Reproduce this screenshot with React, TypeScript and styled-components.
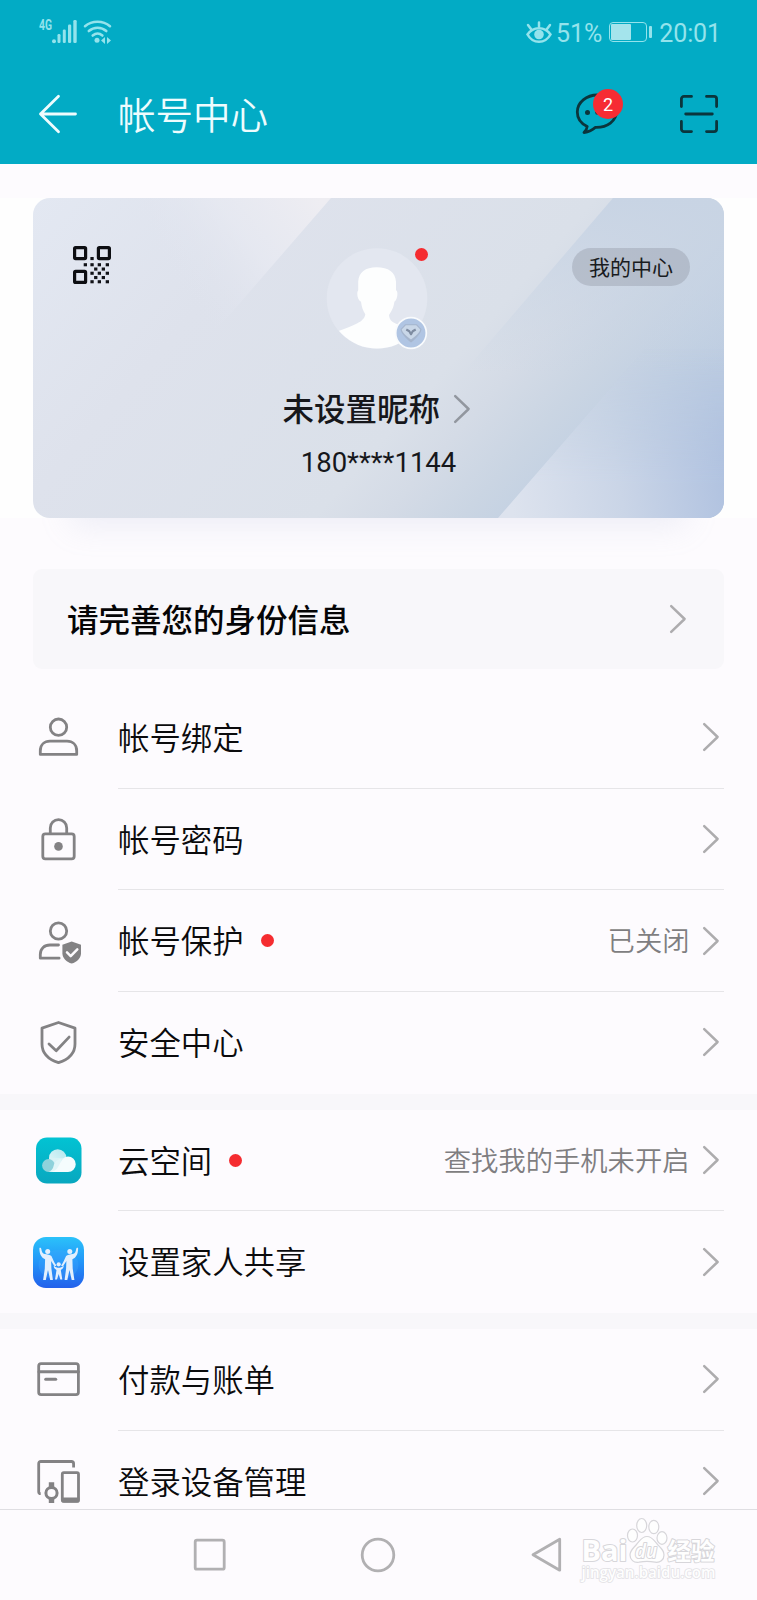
import React from 'react';
import styled, { createGlobalStyle } from 'styled-components';

const GlobalStyle = createGlobalStyle`
  * { box-sizing: border-box; }
  html, body { margin: 0; padding: 0; }
  body {
    width: 757px;
    height: 1600px;
    overflow: hidden;
    background: #fdfbfe;
    font-family: Roboto, "Noto Sans CJK SC", sans-serif;
    color: #0b0b0d;
  }
  svg { display: block; overflow: visible; flex: none; }
`;

const Screen = styled.div`
  width: 757px;
  height: 1600px;
  display: flex;
  flex-direction: column;
  overflow: hidden;
  background: #fdfbfe;
`;

const Header = styled.header`
  height: 164px;
  flex: none;
  background: #02abc5;
  display: flex;
  flex-direction: column;
`;

const StatusBar = styled.div`
  height: 64px;
  display: flex;
  align-items: center;
  justify-content: space-between;
  padding: 0 36px 0 39px;
  color: #94e3ec;
`;

const StatusGroup = styled.div`
  display: flex;
  align-items: center;
`;

const StatusText = styled.span<{ $gap: number }>`
  font-size: 25px;
  line-height: 30px;
  margin-left: ${(p) => p.$gap}px;
  padding-top: 3px;
  letter-spacing: -0.1px;
`;

const Battery = styled.div`
  width: 38px;
  height: 20px;
  margin-left: 7px;
  border: 1.5px solid #94e3ec;
  border-radius: 4px;
  padding: 1px;
`;

const BatteryFill = styled.div`
  width: 20px;
  height: 100%;
  background: #a4e4ec;
  border-radius: 1px;
`;

const BatteryTip = styled.div`
  width: 3px;
  height: 12px;
  margin-left: 2px;
  border-radius: 1px;
  background: #94e3ec;
`;

const TitleBar = styled.div`
  height: 100px;
  display: flex;
  align-items: center;
  padding: 0 39px;
`;

const Title = styled.h1`
  margin: 0 auto 0 41px;
  font-size: 37.5px;
  line-height: 50px;
  font-weight: 350;
  color: #eefcfe;
  padding-top: 4px;
`;

const ChatButton = styled.div`
  position: relative;
  width: 42px;
  height: 40px;
  margin-right: 62px;
`;

const CountBadge = styled.span`
  position: absolute;
  left: 17px;
  top: -5.5px;
  width: 30px;
  height: 30px;
  border-radius: 50%;
  background: #f62c33;
  color: #fff;
  font-size: 18px;
  line-height: 31px;
  text-align: center;
`;

const CardBand = styled.section`
  flex: none;
  margin-top: 34px;
  height: 320px;
  padding: 0 33px;
  background: #fefefe;
`;

const ProfileCard = styled.div`
  position: relative;
  height: 320px;
  border-radius: 17px;
  box-shadow: 0 46px 30px -38px rgba(165, 178, 210, 0.18);
`;

const CardArt = styled.svg`
  position: absolute;
  inset: 0;
  border-radius: 17px;
  overflow: hidden;
`;

const CardContent = styled.div`
  position: relative;
  height: 100%;
  display: flex;
  flex-direction: column;
`;

const CardTop = styled.div`
  display: grid;
  grid-template-columns: 1fr 102px 1fr;
  height: 153px;
  padding: 48px 34px 0 40px;
  align-items: start;
`;

const AvatarBox = styled.div`
  position: relative;
  width: 102px;
  height: 102px;
  margin-left: -3.5px;
  margin-top: 2px;
`;

const Dot = styled.i`
  width: 13px;
  height: 13px;
  border-radius: 50%;
  background: #f52c30;
  flex: none;
`;

const AvatarDot = styled(Dot)`
  position: absolute;
  left: 88px;
  top: 0;
`;

const MemberBadge = styled.svg`
  position: absolute;
  left: 68px;
  top: 68.5px;
`;

const CenterPill = styled.span`
  justify-self: end;
  margin-top: 2px;
  height: 38px;
  width: 118px;
  border-radius: 19px;
  background: rgba(140, 146, 160, 0.37);
  font-size: 21px;
  line-height: 40px;
  text-align: center;
  color: #191b20;
`;

const NameRow = styled.div`
  display: flex;
  align-items: center;
  justify-content: center;
  gap: 14px;
  height: 44px;
  margin-top: 36px;
  padding-right: 4.5px;
`;

const Nickname = styled.span`
  font-size: 31.5px;
  line-height: 44px;
  font-weight: 500;
  color: #16171b;
  padding-top: 4px;
`;

const Phone = styled.div`
  text-align: center;
  margin-top: 14px;
  font-size: 27.5px;
  line-height: 36px;
  color: #16171b;
`;

const Notice = styled.section`
  flex: none;
  margin: 51px 33px 18px;
  height: 100px;
  padding: 0 38.5px 0 34px;
  border-radius: 9px;
  background: #f8f7fa;
  display: flex;
  align-items: center;
  justify-content: space-between;
`;

const NoticeText = styled.span`
  font-size: 31.5px;
  line-height: 46px;
  font-weight: 500;
  color: #050506;
  padding-top: 6px;
`;

const Group = styled.section<{ $clip?: boolean }>`
  flex: ${(p) => (p.$clip ? '1 1 0' : 'none')};
  overflow: hidden;
  border-bottom: ${(p) => (p.$clip ? '0' : '16px solid #f8f7fa')};
`;

const Row = styled.div`
  height: 101.7px;
  display: flex;
  align-items: center;
  padding-left: 32px;
`;

const RowBody = styled.div<{ $last?: boolean }>`
  flex: 1;
  height: 100%;
  margin: 0 33px 0 32.5px;
  padding-right: 5px;
  display: flex;
  align-items: center;
  border-bottom: 1px solid ${(p) => (p.$last ? 'transparent' : '#e6e5e8')};
`;

const RowLabel = styled.span`
  font-size: 31.4px;
  line-height: 46px;
  font-weight: 350;
  margin-left: 0.5px;
  margin-right: 17px;
  padding-top: 5px;
`;

const RowValue = styled.span`
  margin-left: auto;
  margin-right: 13.5px;
  font-size: 27.3px;
  line-height: 40px;
  font-weight: 350;
  color: #7f7e81;
  padding-top: 3.5px;
`;

const ChevronSlot = styled.span<{ $push: boolean }>`
  margin-left: ${(p) => (p.$push ? 'auto' : '0')};
`;

const NavBar = styled.nav`
  position: relative;
  flex: none;
  height: 91px;
  border-top: 1.5px solid #dfdee2;
  background: #fdfbfe;
  display: flex;
  justify-content: center;
  align-items: center;
  gap: 134.5px;
  padding-right: 1px;
`;

const Watermark = styled.div`
  position: absolute;
  left: 580px;
  top: -3.5px;
  width: 138px;
  height: 78px;
`;

const Chevron = ({ color = '#adacae' }: { color?: string }) => (
  <svg width="16" height="28" viewBox="0 0 16 28" fill="none" stroke={color} strokeWidth="2.5" strokeLinecap="round" strokeLinejoin="round">
    <path d="M1.2 1.2 14.6 14 1.2 26.8" />
  </svg>
);

const LineIcon = ({ children }: { children: React.ReactNode }) => (
  <svg width="53" height="53" viewBox="0 0 53 53" fill="none" stroke="#838284" strokeWidth="2.8" strokeLinecap="round" strokeLinejoin="round">
    {children}
  </svg>
);

const PersonIcon = () => (
  <LineIcon>
    <circle cx="26.5" cy="16.2" r="8.2" />
    <path d="M8.3 43.4V39.9C8.3 33.7 12.5 30.2 18 30.2h17c5.5 0 9.7 3.500 9.700 9.700V43.4Z" />
  </LineIcon>
);

const LockIcon = () => (
  <LineIcon>
    <rect x="10.8" y="20.9" width="31.4" height="25" rx="2.6" />
    <path d="M18.3 20.6V14.9a8.2 8.2 0 0 1 16.4 0V20.6" />
    <circle cx="26.5" cy="33.4" r="4.3" fill="#838284" stroke="none" />
  </LineIcon>
);

const GuardIcon = () => (
  <LineIcon>
    <circle cx="26.5" cy="16" r="8.2" />
    <path d="M26.5 30H18c-5.5 0-9.7 3.5-9.7 9.5v3.7h18.8" />
    <path d="M39.7 26.4 49 29.7v8.6c0 5-4.2 8.8-9.3 10.3-5.1-1.5-9.3-5.3-9.3-10.3V29.7Z" fill="#838284" stroke="none" />
    <path d="m35 37.4 3.700 3.700 6.600-6.800" stroke="#fdfbfe" strokeWidth="2.500" />
  </LineIcon>
);

const ShieldIcon = () => (
  <LineIcon>
    <path d="M26.5 6.5 43 12.1v15.800c0 9.500-7.400 15.700-16.500 18.800C17.400 43.600 10 37.400 10 27.900V12.100Z" />
    <path d="m17 28 7.200 6.700 12.900-13.600" />
  </LineIcon>
);

const PaymentIcon = () => (
  <LineIcon>
    <rect x="6.7" y="10.7" width="39.7" height="31" rx="2.4" />
    <path d="M7 18.8h39.4" strokeWidth="3" />
    <path d="M13.7 26.3h10" strokeWidth="3" />
  </LineIcon>
);

const DevicesIcon = () => (
  <LineIcon>
    <path d="M8.7 38.6c-1.3 0-2-.6-2-1.9V8.7c0-1.4.8-2.200 2.200-2.200h30.500c1.400 0 2.200.8 2.200 2.200V12.400" strokeLinecap="butt" />
    <rect x="30.3" y="17.7" width="16.2" height="28.6" rx="1.5" />
    <path d="M29.5 42.4h18v3.500a1.500 1.500 0 0 1-1.500 1.500H31a1.500 1.500 0 0 1-1.500-1.500Z" fill="#838284" stroke="none" />
    <circle cx="19.5" cy="38" r="5.6" strokeWidth="3" />
    <path d="M16.8 27.3h5.400v5h-5.400ZM16.800 43.200h5.400v4.700h-5.400Z" fill="#838284" stroke="none" />
  </LineIcon>
);

const CloudIcon = () => (
  <svg width="53" height="53" viewBox="0 0 53 53">
    <defs>
      <linearGradient id="cloudBg" x1="0" y1="0" x2="0" y2="1">
        <stop offset="0" stopColor="#02c3d3" />
        <stop offset="1" stopColor="#09a7bf" />
      </linearGradient>
      <linearGradient id="cloudTop" x1="0" y1="1" x2="1" y2="0">
        <stop offset="0" stopColor="#e4f7fa" />
        <stop offset="1" stopColor="#b4e8ee" />
      </linearGradient>
    </defs>
    <rect x="4" y="3.5" width="45.5" height="46" rx="11" fill="url(#cloudBg)" />
    <circle cx="25.700" cy="24" r="8.700" fill="url(#cloudTop)" />
    <path d="M17.500 24h16l-6 13.800H17Z" fill="#d9f3f6" />
    <circle cx="16.500" cy="31.500" r="6.400" fill="#8fd2db" />
    <path d="M17 37.800c2.500-1 4-3 4.500-5.500 1-4.500 4-7 8-7.500l-2 13Z" fill="#e2f6f8" />
    <path d="M17 37.900c6 0 8.500-2.800 10.700-7.800 2.300-5 5-7.700 8.300-7.700a7.750 7.750 0 0 1 0 15.500Z" fill="#f5fcfd" />
  </svg>
);

const Adult = () => (
  <>
    <circle cx="15.700" cy="15.500" r="2.500" />
    <path d="M7.400 11.900c1-.6 1.700 0 1.900 1 .5 3 1.300 4.300 3.500 5.200 2.500.6 5.300.5 6.600 2 1.400 3 2.700 6.500 5 9.400-.8.900-1.700.7-2.400-.1l-2.900-4.300.3 7.500 1.500 11.500h-2.700l-2.200-10.200-2.200 10.200h-2.700l1.700-11.500.3-9.300c-3.800-2-5.700-5-5.700-11.400Z" />
  </>
);

const FamilyIcon = () => (
  <svg width="53" height="53" viewBox="0 0 53 53">
    <defs>
      <linearGradient id="familyBg" x1="0" y1="0" x2="0" y2="1">
        <stop offset="0" stopColor="#2bc2fa" />
        <stop offset=".5" stopColor="#2294f8" />
        <stop offset="1" stopColor="#2360eb" />
      </linearGradient>
    </defs>
    <rect x="1" y="1" width="51" height="51" rx="13" fill="url(#familyBg)" />
    <ellipse cx="26.5" cy="29" rx="20" ry="15" fill="#49a9ff" opacity=".28" />
    <g fill="#e3effd">
      <Adult />
      <g transform="translate(53.500 0) scale(-1 1)"><Adult /></g>
      <circle cx="26.700" cy="28.300" r="2.100" />
      <path d="M22 29.500c1.500 2 3 2.200 4.700 2.200s3.200-.2 4.700-2.200c.8 2-1 3.500-2.600 4.500l1.500 9.500h-2l-1.600-5.500-1.700 5.500h-2l1.500-9.500c-1.600-1-3.400-2.500-2.500-4.500Z" />
    </g>
  </svg>
);

const qrDots: [number, number][] = [
  [19, 12.5], [12.3, 18.7], [19, 18.7], [26.3, 18.7], [34.3, 18.7],
  [22.7, 23], [30.3, 23], [19, 27.2], [26.3, 27.2], [34.3, 27.2],
  [22.7, 31.5], [30.3, 31.5], [19, 35.7], [26.3, 35.7], [34.3, 35.7],
];

const QrIcon = () => (
  <svg width="38" height="38" viewBox="0 0 38 38">
    <g fill="none" stroke="#0d0e12" strokeWidth="3.2" strokeLinejoin="round">
      <rect x="1.6" y="1.6" width="11" height="11" rx="1" />
      <rect x="25.4" y="1.6" width="11" height="11" rx="1" />
      <rect x="1.6" y="25.4" width="11" height="11" rx="1" />
    </g>
    {qrDots.map(([x, y]) => (
      <rect key={`${x}-${y}`} x={x - 1.6} y={y - 1.5} width="3.3" height="3.1" fill="#111217" />
    ))}
  </svg>
);

const CardArtwork = () => (
  <CardArt width="691" height="320" viewBox="0 0 691 320">
    <defs>
      <linearGradient id="base" gradientUnits="userSpaceOnUse" x1="0" y1="0" x2="547" y2="482">
        <stop offset="0" stopColor="#e3e8f2" />
        <stop offset=".27" stopColor="#dee2ec" />
        <stop offset=".58" stopColor="#dae0e9" />
        <stop offset=".65" stopColor="#d4dbe6" />
        <stop offset=".73" stopColor="#cad5e3" />
        <stop offset=".82" stopColor="#c0cfe2" />
        <stop offset="1" stopColor="#b1c3df" />
      </linearGradient>
      <linearGradient id="glow" gradientUnits="userSpaceOnUse" x1="285" y1="0" x2="155" y2="100">
        <stop offset="0" stopColor="#eeedf2" />
        <stop offset=".5" stopColor="#e8eaf2" stopOpacity=".75" />
        <stop offset="1" stopColor="#e0e4ef" stopOpacity="0" />
      </linearGradient>
      <linearGradient id="beam" x1="0" y1="0" x2="0" y2="1">
        <stop offset="0" stopColor="#c8d4e4" />
        <stop offset="1" stopColor="#c8d4e4" stopOpacity="0" />
      </linearGradient>
      <linearGradient id="corner" gradientUnits="userSpaceOnUse" x1="475" y1="285" x2="691" y2="250">
        <stop offset="0" stopColor="#dde3ee" />
        <stop offset=".5" stopColor="#cad5e7" />
        <stop offset="1" stopColor="#b0c2e0" />
      </linearGradient>
      <linearGradient id="fade" x1="0" y1="0" x2="0" y2="1">
        <stop offset="0" stopColor="#fff" stopOpacity="0" />
        <stop offset=".8" stopColor="#fff" />
      </linearGradient>
      <mask id="cornerMask" maskUnits="userSpaceOnUse" x="0" y="0" width="691" height="320">
        <rect y="150" width="691" height="170" fill="url(#fade)" />
      </mask>
    </defs>
    <rect width="691" height="320" fill="url(#base)" />
    <path d="M0 0H298L180 136H0Z" fill="url(#glow)" />
    <path d="M580 0H691V175H430Z" fill="url(#beam)" />
    <path d="M465 320 647 110H691V320Z" fill="url(#corner)" mask="url(#cornerMask)" />
  </CardArt>
);

const Avatar = () => (
  <AvatarBox>
    <svg width="102" height="102" viewBox="0 0 102 102">
      <defs><clipPath id="round"><circle cx="50" cy="50.5" r="50" /></clipPath></defs>
      <circle cx="50" cy="50.5" r="50.3" fill="#e3e7f0" />
      <g clipPath="url(#round)">
        <path d="M49.500 19.300c12 0 19 5 19.500 14.500v8.500c2.500 1 1.500 9.500-1.600 11.500-.8 6-2.700 9-5.400 13.200.4 6 4 7.500 11.500 10.500 8 3 14 5.500 18 8.500V104H10V83.500c8-3 14.500-5 20-8 4.500-2.300 7.700-5 8.300-9.200-2.300-3.500-3.600-7-4.300-12.500-3.800-2-4.600-9-2.800-11.500v-8.500c.5-9.500 7.300-14.500 18.300-14.500Z" fill="#fdfefe" />
      </g>
    </svg>
    <AvatarDot />
    <MemberBadge width="32" height="32" viewBox="0 0 32 32">
      <circle cx="16" cy="16" r="15.3" fill="#b0c5e3" stroke="#f9fbfd" strokeWidth="1.7" />
      <path d="M10.200 7.200h11.600l4.700 5c-.5 4-5 9-10.500 13.300C10.500 21.200 6 16.200 5.500 12.200Z" fill="#a5b5cd" />
      <path d="M10.800 8.200h10.400l4.100 4.200C24.500 16 20.500 19 16 22.500 11.500 19 7.500 16 6.700 12.400Z" fill="#c9d7e8" />
      <path d="m11.300 12.500 3 1.700 1.700 3 1.700-3 3-1.700" fill="none" stroke="#7e8ca1" strokeWidth="2.200" strokeLinejoin="round" />
    </MemberBadge>
  </AvatarBox>
);

const SignalIcons = () => (
  <svg width="74" height="26" viewBox="0 0 74 26" fill="#94e3ec">
    <text x="0" y="11" fontFamily="Roboto" fontWeight="700" fontSize="14" textLength="13" lengthAdjust="spacingAndGlyphs">4G</text>
    <circle cx="15" cy="22.2" r="2" />
    <rect x="18.5" y="15" width="3" height="9" rx="1.2" />
    <rect x="23.8" y="10.5" width="3" height="13.5" rx="1.2" />
    <rect x="29" y="5.5" width="3.2" height="18.5" rx="1.2" />
    <rect x="34.3" y="1" width="3.4" height="23" rx="1.2" />
    <g fill="none" stroke="#94e3ec" strokeWidth="2.6" strokeLinecap="round">
      <path d="M46 7.2c7-6 18-6 25 0" />
      <path d="M49.8 12c5-4.300 12.500-4.300 17.500 0" />
      <path d="M53.7 16.5c3-2.400 6.800-2.400 9.700 0" />
    </g>
    <circle cx="58" cy="21.300" r="2.500" />
    <path d="M66 18v7l-4-3.500ZM68 18v7l4-3.500Z" />
  </svg>
);

const EyeIcon = () => (
  <svg width="26" height="24" viewBox="0 0 26 24" fill="none" stroke="#94e3ec" strokeWidth="2.5" strokeLinecap="round">
    <path d="M1.5 14.5C7 6 19 6 24.5 14.5 19 24.3 7 24.3 1.5 14.5Z" />
    <circle cx="13" cy="14.5" r="4.8" fill="#94e3ec" stroke="none" />
    <path d="M13 2.5V6.500M2 5l3 4M24 5l-3 4" />
  </svg>
);

type Item = { icon: React.ReactNode; label: string; value?: string; dot?: boolean };

const groups: Item[][] = [
  [
    { icon: <PersonIcon />, label: '帐号绑定' },
    { icon: <LockIcon />, label: '帐号密码' },
    { icon: <GuardIcon />, label: '帐号保护', value: '已关闭', dot: true },
    { icon: <ShieldIcon />, label: '安全中心' },
  ],
  [
    { icon: <CloudIcon />, label: '云空间', value: '查找我的手机未开启', dot: true },
    { icon: <FamilyIcon />, label: '设置家人共享' },
  ],
  [
    { icon: <PaymentIcon />, label: '付款与账单' },
    { icon: <DevicesIcon />, label: '登录设备管理' },
  ],
];

const MenuGroup = ({ items, clip }: { items: Item[]; clip: boolean }) => (
  <Group $clip={clip}>
    {items.map((item, i) => (
      <Row key={item.label}>
        {item.icon}
        <RowBody $last={i === items.length - 1}>
          <RowLabel>{item.label}</RowLabel>
          {item.dot && <Dot />}
          {item.value && <RowValue>{item.value}</RowValue>}
          <ChevronSlot $push={!item.value}><Chevron /></ChevronSlot>
        </RowBody>
      </Row>
    ))}
  </Group>
);

const BaiduMark = () => (
  <Watermark>
    <svg width="138" height="78" viewBox="0 0 138 78" fill="#fefefe" stroke="#d7d6da" strokeWidth="1.2">
      <ellipse cx="52.5" cy="28.5" rx="5" ry="6.5" />
      <ellipse cx="61.7" cy="18.5" rx="5" ry="7" />
      <ellipse cx="73.8" cy="20" rx="5" ry="6.7" />
      <ellipse cx="82" cy="31" rx="5" ry="6.3" />
      <path d="M67 29.500c5 0 7 4 10.500 8 4 4 6.500 6 6.500 10.500 0 5-4 8-9 7.200-5.500-1-10.500-1-16 0-5.500.8-9-2.700-9-7.200 0-4.500 3-6.500 6.500-10.500s5.500-8 10.500-8Z" />
      <g fontFamily="'Open Sans', sans-serif" fontWeight="700" paintOrder="stroke" strokeWidth="2" strokeLinejoin="round">
        <text x="1.5" y="53.5" fontSize="29" textLength="46" lengthAdjust="spacingAndGlyphs">Bai</text>
        <text x="55" y="51" fontSize="19" fontStyle="italic" fontWeight="600" textLength="22" lengthAdjust="spacingAndGlyphs">du</text>
        <text x="87.5" y="53" fontSize="23.5" fontFamily="'Noto Sans CJK SC', sans-serif" textLength="47">经验</text>
      </g>
      <text x="1.5" y="71" fontFamily="'Open Sans', sans-serif" fontWeight="600" fontSize="15.5" strokeWidth="1.6" stroke="#e2e1e5" paintOrder="stroke" textLength="134" lengthAdjust="spacingAndGlyphs">jingyan.baidu.com</text>
    </svg>
  </Watermark>
);

export default function App() {
  return (
    <Screen>
      <GlobalStyle />
      <Header>
        <StatusBar>
          <SignalIcons />
          <StatusGroup>
            <EyeIcon />
            <StatusText $gap={4}>51%</StatusText>
            <Battery><BatteryFill /></Battery>
            <BatteryTip />
            <StatusText $gap={7}>20:01</StatusText>
          </StatusGroup>
        </StatusBar>
        <TitleBar>
          <svg width="38" height="38" viewBox="0 0 38 38" fill="none" stroke="#eefcfe" strokeWidth="2.8" strokeLinecap="round" strokeLinejoin="round">
            <path d="M19.500 1.300 1.500 19l18 17.700M1.500 19h35" />
          </svg>
          <Title>帐号中心</Title>
          <ChatButton>
            <svg width="42" height="40" viewBox="0 0 42 40" fill="none" stroke="#0b353c" strokeWidth="2.8" strokeLinecap="round" strokeLinejoin="round">
              <path d="M21.500 1C10.500 1 1.300 8.200 1.300 18c0 6.300 3.600 11.500 9.900 14.500-.2 2.300-1.200 4-3.200 6 4.500-.5 8.500-2.300 11.500-5.200 11.700.4 21-6.500 21-16S32.500 1 21.500 1Z" />
              <circle cx="11.5" cy="18.500" r="2.500" fill="#0b353c" stroke="none" />
              <circle cx="21.500" cy="18.500" r="2.300" fill="#0b353c" stroke="none" />
            </svg>
            <CountBadge>2</CountBadge>
          </ChatButton>
          <svg width="38" height="38" viewBox="0 0 38 38" fill="none" stroke="#0b353c" strokeWidth="2.8" strokeLinecap="round">
            <path d="M1.400 11.500V4a2.600 2.600 0 0 1 2.600-2.600h7.500M26.500 1.400H34A2.600 2.600 0 0 1 36.600 4v7.500M36.600 26.500V34a2.600 2.600 0 0 1-2.600 2.600h-7.500M11.500 36.600H4A2.600 2.600 0 0 1 1.400 34v-7.500M5.700 19h26.600" />
          </svg>
        </TitleBar>
      </Header>

      <CardBand>
        <ProfileCard>
          <CardArtwork />
          <CardContent>
            <CardTop>
              <QrIcon />
              <Avatar />
              <CenterPill>我的中心</CenterPill>
            </CardTop>
            <NameRow>
              <Nickname>未设置昵称</Nickname>
              <Chevron color="#92979f" />
            </NameRow>
            <Phone>180****1144</Phone>
          </CardContent>
        </ProfileCard>
      </CardBand>

      <Notice>
        <NoticeText>请完善您的身份信息</NoticeText>
        <Chevron />
      </Notice>

      {groups.map((items, i) => (
        <MenuGroup key={items[0].label} items={items} clip={i === groups.length - 1} />
      ))}

      <NavBar>
        <svg width="34" height="34" viewBox="0 0 34 34" fill="none" stroke="#b1b0b2" strokeWidth="2.8">
          <rect x="2.200" y="2.200" width="29" height="29" rx="1.8" />
        </svg>
        <svg width="34" height="34" viewBox="0 0 34 34" fill="none" stroke="#b1b0b2" strokeWidth="2.8">
          <circle cx="17" cy="17" r="15.8" />
        </svg>
        <svg width="34" height="34" viewBox="0 0 34 34" fill="none" stroke="#b1b0b2" strokeWidth="2.8" strokeLinejoin="round">
          <path d="M29.700 1.200v31L3 16.700Z" />
        </svg>
        <BaiduMark />
      </NavBar>
    </Screen>
  );
}
